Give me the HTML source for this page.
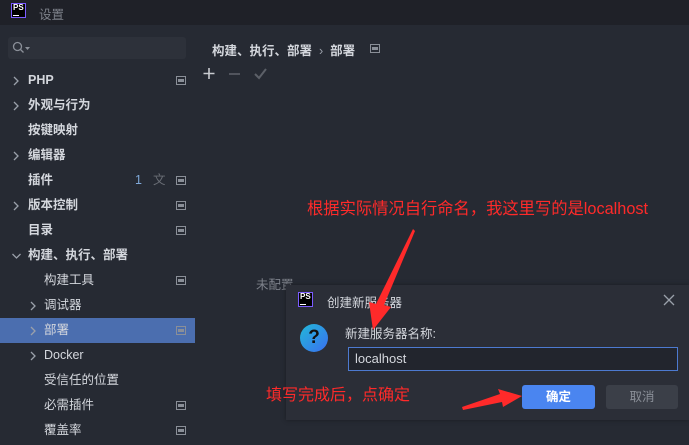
<!DOCTYPE html>
<html><head><meta charset="utf-8"><style>
*{margin:0;padding:0;box-sizing:border-box}
body{width:689px;height:445px;overflow:hidden;background:#262a33;font-family:"Liberation Sans","Noto Sans CJK SC",sans-serif;color:#d4d7dd;font-size:12.5px;position:relative}
.abs{position:absolute}
.title{left:0;top:0;width:689px;height:25px;background:#1f2128}
.ps{width:15px;height:15px;border:1px solid #7b5cff;background:#000;color:#fff;font-size:8px;font-weight:bold;line-height:8px;padding-left:1px}
.row{position:absolute;left:0;width:195px;height:25px;line-height:25px;font-weight:bold}
.chev{position:absolute;top:8px;width:8px;height:10px}
.ic{position:absolute;left:176px;top:8px;width:10px;height:9px;border:1px solid #8a8f98}
.ic:after{content:"";position:absolute;left:1px;top:2px;width:6px;height:3px;background:#8a8f98}
.red{color:#ff2a2a;font-size:16.3px}
</style></head><body>
<div class="abs title"></div>
<div class="abs ps" style="left:11px;top:3px">PS<div style="width:6px;height:1px;background:#fff;margin-top:3px"></div></div>
<div class="abs" style="left:39px;top:4px;color:#7d818a;font-size:12.5px">设置</div>
<div class="abs" style="left:8px;top:37px;width:178px;height:22px;background:#2d313a;border-radius:3px"></div>
<svg class="abs" style="left:12px;top:41px" width="20" height="14"><circle cx="5.5" cy="5.5" r="4" fill="none" stroke="#8a8f98" stroke-width="1.3"/><line x1="8.5" y1="8.5" x2="11.5" y2="11.5" stroke="#8a8f98" stroke-width="1.3"/><polygon points="13,6 18,6 15.5,9" fill="#8a8f98"/></svg>
<div class="abs" style="left:212px;top:40px;font-weight:bold">构建、执行、部署 <span style="color:#9aa0aa;font-weight:normal">&nbsp;›&nbsp;</span> 部署</div>
<div class="abs" style="left:370px;top:44px;width:10px;height:9px;border:1px solid #8a8f98"><div style="margin:2px 1px;height:3px;background:#8a8f98"></div></div>
<svg class="abs" style="left:203px;top:67px" width="70" height="14"><path d="M6 1V12M0.5 6.5H11.5" stroke="#c8cbd0" stroke-width="1.6"/><path d="M26 7H37" stroke="#5c6068" stroke-width="1.6"/><path d="M52 7L56 11L63 2" stroke="#5c6068" stroke-width="2" fill="none"/></svg>

<svg width="0" height="0" style="position:absolute"><defs><symbol id="c" viewBox="0 0 8 10"><path d="M2 1L6 5L2 9" fill="none" stroke="#9aa0aa" stroke-width="1.3"/></symbol><symbol id="d" viewBox="0 0 8 10"><path d="M0 3L4 7L8 3" fill="none" stroke="#9aa0aa" stroke-width="1.3"/></symbol></defs></svg>

<div class="row" style="top:68px"><svg class="chev" style="left:12px"><use href="#c"/></svg><span style="margin-left:28px">PHP</span><i class="ic"></i></div>
<div class="row" style="top:93px"><svg class="chev" style="left:12px"><use href="#c"/></svg><span style="margin-left:28px">外观与行为</span></div>
<div class="row" style="top:118px"><span style="margin-left:28px">按键映射</span></div>
<div class="row" style="top:143px"><svg class="chev" style="left:12px"><use href="#c"/></svg><span style="margin-left:28px">编辑器</span></div>
<div class="row" style="top:168px"><span style="margin-left:28px">插件</span><span class="abs" style="left:135px;color:#7fa8d8;font-weight:normal">1</span><span class="abs" style="left:153px;color:#6a6e76;font-weight:normal">文</span><i class="ic"></i></div>
<div class="row" style="top:193px"><svg class="chev" style="left:12px"><use href="#c"/></svg><span style="margin-left:28px">版本控制</span><i class="ic"></i></div>
<div class="row" style="top:218px"><span style="margin-left:28px">目录</span><i class="ic"></i></div>
<div class="row" style="top:243px"><svg class="chev" style="left:12px;width:9px"><use href="#d"/></svg><span style="margin-left:28px">构建、执行、部署</span></div>
<div class="row" style="top:268px;font-weight:normal"><span style="margin-left:44px">构建工具</span><i class="ic"></i></div>
<div class="row" style="top:293px;font-weight:normal"><svg class="chev" style="left:29px"><use href="#c"/></svg><span style="margin-left:44px">调试器</span></div>
<div class="row" style="top:318px;font-weight:normal;background:#4b6eaf"><svg class="chev" style="left:29px"><use href="#c"/></svg><span style="margin-left:44px">部署</span><i class="ic"></i></div>
<div class="row" style="top:343px;font-weight:normal"><svg class="chev" style="left:29px"><use href="#c"/></svg><span style="margin-left:44px">Docker</span></div>
<div class="row" style="top:368px;font-weight:normal"><span style="margin-left:44px">受信任的位置</span></div>
<div class="row" style="top:393px;font-weight:normal"><span style="margin-left:44px">必需插件</span><i class="ic"></i></div>
<div class="row" style="top:418px;font-weight:normal"><span style="margin-left:44px">覆盖率</span><i class="ic"></i></div>

<div class="abs" style="left:256px;top:274px;color:#7d818a">未配置</div>

<div class="abs" style="left:286px;top:285px;width:403px;height:135px;background:#2b2e37;box-shadow:0 0 4px #1a1c22"></div>
<div class="abs ps" style="left:298px;top:292px">PS<div style="width:6px;height:1px;background:#fff;margin-top:3px"></div></div>
<div class="abs" style="left:327px;top:292px">创建新服务器</div>
<svg class="abs" style="left:663px;top:294px" width="12" height="12"><path d="M1 1L11 11M11 1L1 11" stroke="#9aa0aa" stroke-width="1.3"/></svg>
<div class="abs" style="left:300px;top:324px;width:28px;height:28px;border-radius:50%;background:linear-gradient(135deg,#22b8d8,#3a6ff0);color:#111;font-weight:bold;font-size:19px;text-align:center;line-height:28px">?</div>
<div class="abs" style="left:345px;top:323px">新建服务器名称:</div>
<div class="abs" style="left:348px;top:347px;width:330px;height:24px;border:1px solid #4d7ad0;background:#22252d;padding-left:6px;line-height:22px;font-size:13px">localhost</div>
<div class="abs" style="left:522px;top:385px;width:73px;height:24px;background:#4a85f0;border-radius:3px;color:#fff;font-weight:bold;text-align:center;line-height:24px">确定</div>
<div class="abs" style="left:606px;top:385px;width:72px;height:24px;background:#3b3f48;border-radius:3px;color:#8a8f98;text-align:center;line-height:24px">取消</div>

<div class="abs red" style="left:307px;top:195px">根据实际情况自行命名，我这里写的是localhost</div>
<div class="abs red" style="left:266px;top:381px;font-size:16px">填写完成后，点确定</div>
<svg class="abs" style="left:0;top:0" width="689" height="445">
<polygon points="413,229 415,231 384,305 391,307 373,330 369,302 376,304" fill="#ff2a2a"/>
<polygon points="463,410 462,407 500,394 498,389 522,396 503,407 502,402" fill="#ff2a2a"/>
</svg>
</body></html>
